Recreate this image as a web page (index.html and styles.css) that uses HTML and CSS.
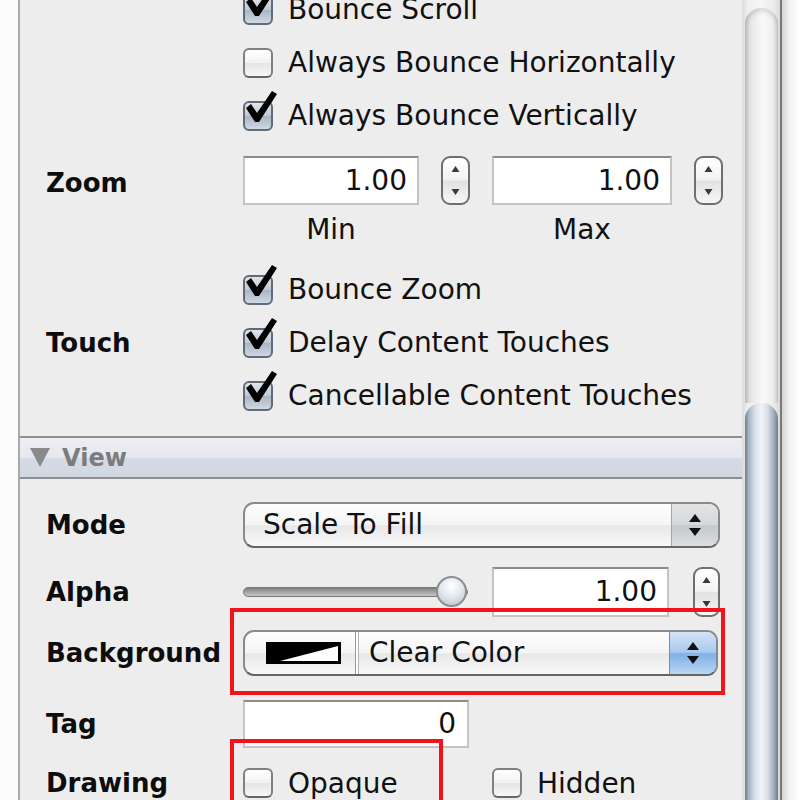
FILE: index.html
```html
<!DOCTYPE html>
<html>
<head>
<meta charset="utf-8">
<link rel="stylesheet" href="styles.css">
</head>
<body>
<div class="window">
  <div class="gutter"></div>
  <div class="panel">
    <div class="section sec-scroll">
      <div class="row row-check">
        <div class="label"></div>
        <div class="ctl"><span class="cb on"><svg class="tick" viewBox="0 0 34 40" width="34" height="40"><path d="M2 17 L7 13 L13 22 L28 0 L33 3 L15 31 L11 31 Z"/></svg></span><span>Bounce Scroll</span></div>
      </div>
      <div class="row row-check">
        <div class="label"></div>
        <div class="ctl"><span class="cb"></span><span>Always Bounce Horizontally</span></div>
      </div>
      <div class="row row-check">
        <div class="label"></div>
        <div class="ctl"><span class="cb on"><svg class="tick" viewBox="0 0 34 40" width="34" height="40"><path d="M2 17 L7 13 L13 22 L28 0 L33 3 L15 31 L11 31 Z"/></svg></span><span>Always Bounce Vertically</span></div>
      </div>
      <div class="row row-zoom">
        <div class="label label-zoom">Zoom</div>
        <div class="ctl zoom-grid">
          <div class="field">1.00</div>
          <div class="stepper"><svg viewBox="0 0 29 49" width="29" height="49"><path class="st-up" d="M10.5 16 L14.5 10 L18.5 16 Z"/><path class="st-dn" d="M10.5 33 L14.5 39 L18.5 33 Z"/></svg></div>
          <div class="field">1.00</div>
          <div class="stepper"><svg viewBox="0 0 29 49" width="29" height="49"><path class="st-up" d="M10.5 16 L14.5 10 L18.5 16 Z"/><path class="st-dn" d="M10.5 33 L14.5 39 L18.5 33 Z"/></svg></div>
        </div>
      </div>
      <div class="row row-minmax">
        <div class="label"></div>
        <div class="ctl zoom-grid">
          <div class="cap">Min</div>
          <div></div>
          <div class="cap">Max</div>
          <div></div>
        </div>
      </div>
      <div class="checks-touch">
        <div class="row row-check">
          <div class="label"></div>
          <div class="ctl"><span class="cb on"><svg class="tick" viewBox="0 0 34 40" width="34" height="40"><path d="M2 17 L7 13 L13 22 L28 0 L33 3 L15 31 L11 31 Z"/></svg></span><span>Bounce Zoom</span></div>
        </div>
        <div class="row row-check">
          <div class="label">Touch</div>
          <div class="ctl"><span class="cb on"><svg class="tick" viewBox="0 0 34 40" width="34" height="40"><path d="M2 17 L7 13 L13 22 L28 0 L33 3 L15 31 L11 31 Z"/></svg></span><span>Delay Content Touches</span></div>
        </div>
        <div class="row row-check">
          <div class="label"></div>
          <div class="ctl"><span class="cb on"><svg class="tick" viewBox="0 0 34 40" width="34" height="40"><path d="M2 17 L7 13 L13 22 L28 0 L33 3 L15 31 L11 31 Z"/></svg></span><span>Cancellable Content Touches</span></div>
        </div>
      </div>
    </div>

    <div class="sec-head"><span class="tri"></span><span>View</span></div>

    <div class="section sec-view">
      <div class="row row-mode">
        <div class="label">Mode</div>
        <div class="ctl">
          <div class="popup">
            <div class="popup-text">Scale To Fill</div>
            <div class="popup-arrows"><svg viewBox="0 0 46 42" width="46" height="42"><path d="M17 18 L23 10 L29 18 Z"/><path d="M17 24 L23 32 L29 24 Z"/></svg></div>
          </div>
        </div>
      </div>
      <div class="row row-alpha">
        <div class="label">Alpha</div>
        <div class="ctl alpha-grid">
          <div class="slider"><div class="track"></div><div class="knob"></div></div>
          <div class="field">1.00</div>
          <div class="stepper"><svg viewBox="0 0 27 50" width="27" height="50"><path class="st-up" d="M9.5 16 L13.5 10 L17.5 16 Z"/><path class="st-dn" d="M9.5 34 L13.5 40 L17.5 34 Z"/></svg></div>
        </div>
      </div>
      <div class="row row-bg">
        <div class="label">Background</div>
        <div class="ctl">
          <div class="popup popup-bg">
            <div class="well"><svg viewBox="0 0 75 22" width="75" height="22"><rect x="1" y="1" width="73" height="20" fill="#000"/><path d="M14 19 L72 4 L72 19 Z" fill="#fff"/><rect x="1" y="1" width="73" height="20" fill="none" stroke="#000" stroke-width="2"/></svg></div>
            <div class="well-div"></div>
            <div class="popup-text">Clear Color</div>
            <div class="popup-arrows blue"><svg viewBox="0 0 46 42" width="46" height="42"><path d="M17 18 L23 10 L29 18 Z"/><path d="M17 24 L23 32 L29 24 Z"/></svg></div>
          </div>
          <div class="mark mark-bg"></div>
        </div>
      </div>
      <div class="row row-tag">
        <div class="label">Tag</div>
        <div class="ctl"><div class="field tag-field">0</div></div>
      </div>
      <div class="row row-draw">
        <div class="label">Drawing</div>
        <div class="ctl draw-grid">
          <div class="opt"><span class="cb"></span><span>Opaque</span></div>
          <div class="opt"><span class="cb"></span><span>Hidden</span></div>
          <div class="mark mark-draw"></div>
        </div>
      </div>
    </div>
  </div>
  <div class="scrollbar">
    <div class="channel"></div>
    <div class="thumb"></div>
  </div>
  <div class="edge"></div>
</div>
</body>
</html>
```

FILE: styles.css
```css
* { box-sizing: border-box; }
html, body { margin: 0; padding: 0; }
body {
  font-family: "DejaVu Sans", "Liberation Sans", sans-serif;
  color: #111;
  background: #fff;
}
.window {
  display: flex;
  width: 800px;
  height: 800px;
  overflow: hidden;
}
.gutter {
  width: 20px;
  flex: none;
  background: #fbfbfb;
  border-right: 2px solid #a9a9a9;
}
.panel {
  width: 722px;
  flex: none;
  background: #ededed;
}
.scrollbar {
  width: 40px;
  flex: none;
  display: flex;
  flex-direction: column;
  padding: 0 2px 0 3px;
  border-right: 2px solid #7a7a7a;
  background: linear-gradient(to right, #dadada, #efefef 15%, #f6f6f6 50%, #ebebeb 85%, #d8d8d8);
}
.channel {
  height: 395px;
  margin-top: 8px;
  border-radius: 16px 16px 0 0;
  background: linear-gradient(to right, #c2c2c2, #e6e6e6 18%, #fafafa 55%, #eeeeee 85%, #cdcdcd);
  box-shadow: inset 0 4px 4px rgba(0,0,0,0.12);
}
.thumb {
  flex: 1;
  border-radius: 16px 16px 0 0;
  background: linear-gradient(to right, #6f7d8c, #a9b6c4 12%, #dbe3eb 32%, #f1f4f7 50%, #d3dce5 70%, #9eabba 88%, #6d7b8a);
}
.edge {
  flex: 1;
  background: linear-gradient(to right, #d4d4d4, #f1f1f1 40%, #fff);
}

.section { padding: 0 20px 0 26px; }
.sec-scroll { margin-top: -17px; padding-bottom: 14px; }
.row { display: flex; align-items: center; }
.label {
  width: 197px;
  flex: none;
  font-weight: bold;
  font-size: 26px;
  color: #0d0d0d;
}
.label-zoom { margin-top: 4px; }
.ctl {
  display: flex;
  align-items: center;
  font-size: 28px;
  position: relative;
}
.row-check { height: 53px; }

.cb {
  position: relative;
  flex: none;
  width: 30px;
  height: 30px;
  margin-right: 15px;
  border-radius: 6px;
  border: 2px solid #808080;
  border-bottom-color: #666;
  background: linear-gradient(#ffffff, #f1f1f1 50%, #e4e4e4 51%, #f7f7f7);
}
.cb.on {
  border-color: #5f6b79;
  background: linear-gradient(#dfe5ec, #bfc9d5 50%, #aab6c5 51%, #cfd8e2);
}
.tick {
  position: absolute;
  left: -1px;
  top: -12px;
  overflow: visible;
}
.tick path { fill: #000; }

.row-zoom { margin-top: 14px; }
.zoom-grid {
  display: grid;
  grid-template-columns: 176px 29px 180px 29px;
  column-gap: 22px;
}
.field {
  height: 49px;
  background: #fff;
  border: 2px solid #c4c4c4;
  border-top-color: #8b8b8b;
  text-align: right;
  padding-right: 10px;
  font-size: 28px;
  line-height: 45px;
}
.stepper {
  height: 49px;
  border: 2px solid #6f6f6f;
  border-radius: 9px;
  background: linear-gradient(#ffffff, #f2f2f2 48%, #e2e2e2 52%, #f6f6f6);
  overflow: hidden;
}
.stepper svg { display: block; margin: -2px; }
.st-up, .st-dn { fill: #3a3a3a; }
.row-minmax { margin-top: 10px; height: 30px; }
.cap { text-align: center; line-height: 30px; }
.checks-touch { margin-top: 18px; }

.sec-head {
  height: 43px;
  display: flex;
  align-items: center;
  padding-left: 10px;
  border-top: 2px solid #8e8e8e;
  border-bottom: 2px solid #8e8e8e;
  background: linear-gradient(#eceef2, #e5e8ee 50%, #d5dbe4 51%, #d2d8e1);
  font-weight: bold;
  font-size: 24px;
  color: #7c7c7c;
}
.tri {
  width: 0;
  height: 0;
  margin-right: 12px;
  border-left: 10px solid transparent;
  border-right: 10px solid transparent;
  border-top: 19px solid #8a8a8a;
}

.sec-view { padding-top: 23px; }
.popup {
  width: 477px;
  height: 46px;
  display: flex;
  overflow: hidden;
  border: 2px solid #8a8a8a;
  border-bottom-color: #666;
  border-radius: 11px;
  background: linear-gradient(#fefefe, #f4f4f4 50%, #e7e7e7 52%, #f9f9f9);
}
.popup-text {
  flex: 1;
  padding-left: 18px;
  line-height: 42px;
  white-space: nowrap;
}
.popup-arrows {
  width: 47px;
  flex: none;
  border-left: 1px solid #a5a5a5;
  background: linear-gradient(#e4e4e4, #d4d6d9 50%, #c5c8cc 52%, #dcdee0);
}
.popup-arrows svg { display: block; }
.popup-arrows path { fill: #111; }
.popup-arrows.blue {
  border-left-color: #6f8fb5;
  background: linear-gradient(#d3e4f6, #a9c9ee 48%, #7fb0e8 52%, #b9d7f3);
}

.row-alpha { margin-top: 19px; height: 50px; }
.alpha-grid {
  display: grid;
  grid-template-columns: 225px 177px 27px;
  column-gap: 24px;
  align-items: center;
}
.alpha-grid .field { height: 50px; line-height: 46px; }
.alpha-grid .stepper { height: 50px; }
.slider {
  position: relative;
  height: 32px;
  display: flex;
  align-items: center;
}
.track {
  width: 100%;
  height: 10px;
  border-radius: 5px;
  background: linear-gradient(#7f7f7f, #a4a4a4 50%, #c6c6c6);
  border: 1px solid #777;
}
.knob {
  position: absolute;
  right: 1px;
  top: 0;
  width: 31px;
  height: 31px;
  border-radius: 50%;
  border: 2px solid #8a8f96;
  background: radial-gradient(circle at 50% 30%, #ffffff, #e4e9ef 45%, #bcc6d1 90%);
}

.row-bg { margin-top: 13px; height: 46px; }
.popup-bg { width: 475px; }
.well {
  width: 110px;
  flex: none;
  display: flex;
  align-items: center;
  justify-content: center;
  padding-left: 6px;
}
.well svg { display: block; }
.well-div {
  width: 4px;
  flex: none;
  border-left: 1px solid #9a9a9a;
  border-right: 1px solid #b4b4b4;
  background: #fff;
}
.popup-bg .popup-text { padding-left: 10px; }
.mark {
  position: absolute;
  border: 4px solid #f0141a;
}
.mark-bg {
  left: -13px;
  top: -22px;
  width: 495px;
  height: 87px;
}

.row-tag { margin-top: 24px; height: 48px; }
.tag-field { width: 226px; height: 48px; line-height: 44px; padding-right: 11px; }

.row-draw { margin-top: 20px; height: 30px; }
.draw-grid {
  display: grid;
  grid-template-columns: 249px auto;
}
.opt { display: flex; align-items: center; }
.mark-draw {
  left: -13px;
  top: -28px;
  width: 213px;
  height: 110px;
}
```
